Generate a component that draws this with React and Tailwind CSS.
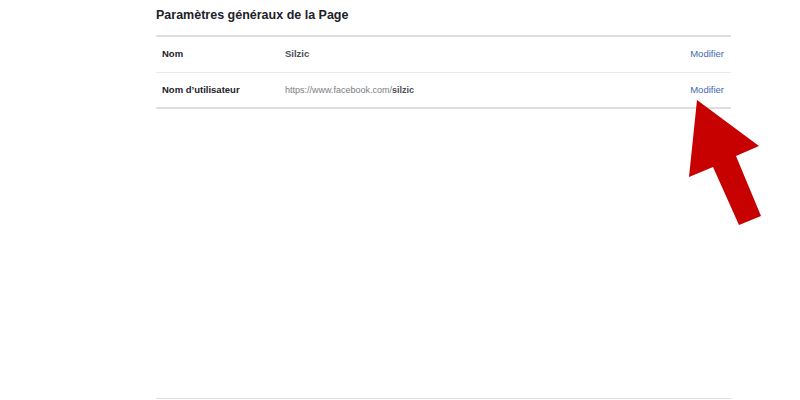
import React from 'react';

const rows = [
  { label: 'Nom', value: <span className="font-bold text-[#4b4f56]">Silzic</span> },
  {
    label: 'Nom d’utilisateur',
    value: (
      <span className="text-[9px] text-[#7a7d82]">
        https://www.facebook.com/<span className="font-bold text-[#4b4f56]">silzic</span>
      </span>
    ),
  },
];

const Arrow = () => (
  <svg className="absolute left-[686px] top-[98px]" width="80" height="130" viewBox="686 98 80 130">
    <polygon points="697,100 759,146 736,156 761,216 739,225 713,167 689,177" fill="#c70000" />
  </svg>
);

export default function App() {
  return (
    <div className="relative w-[800px] h-[400px] bg-white overflow-hidden font-['Liberation_Sans',Arial,sans-serif]">
      <div className="ml-[156px] w-[575px] flex flex-col h-full">
        <h2 className="pt-[7px] h-[35px] text-[12.5px] font-bold text-[#1d2129] leading-[16px]">
          Paramètres généraux de la Page
        </h2>
        <div className="border-t-2 border-b-2 border-[#dddfe2]">
          {rows.map((r, i) => (
            <div
              key={i}
              className={`flex items-center h-[35px] text-[9.5px] ${i > 0 ? 'border-t border-[#e9ebee]' : ''}`}
            >
              <div className="w-[129px] pl-[6px] font-bold text-[#1d2129]">{r.label}</div>
              <div className="flex-1">{r.value}</div>
              <div className="pr-[7px] text-[#4267b2]">Modifier</div>
            </div>
          ))}
        </div>
        <div className="flex-1" />
        <div className="mb-[1px] border-t border-[#dddfe2]" />
      </div>
      <Arrow />
    </div>
  );
}
